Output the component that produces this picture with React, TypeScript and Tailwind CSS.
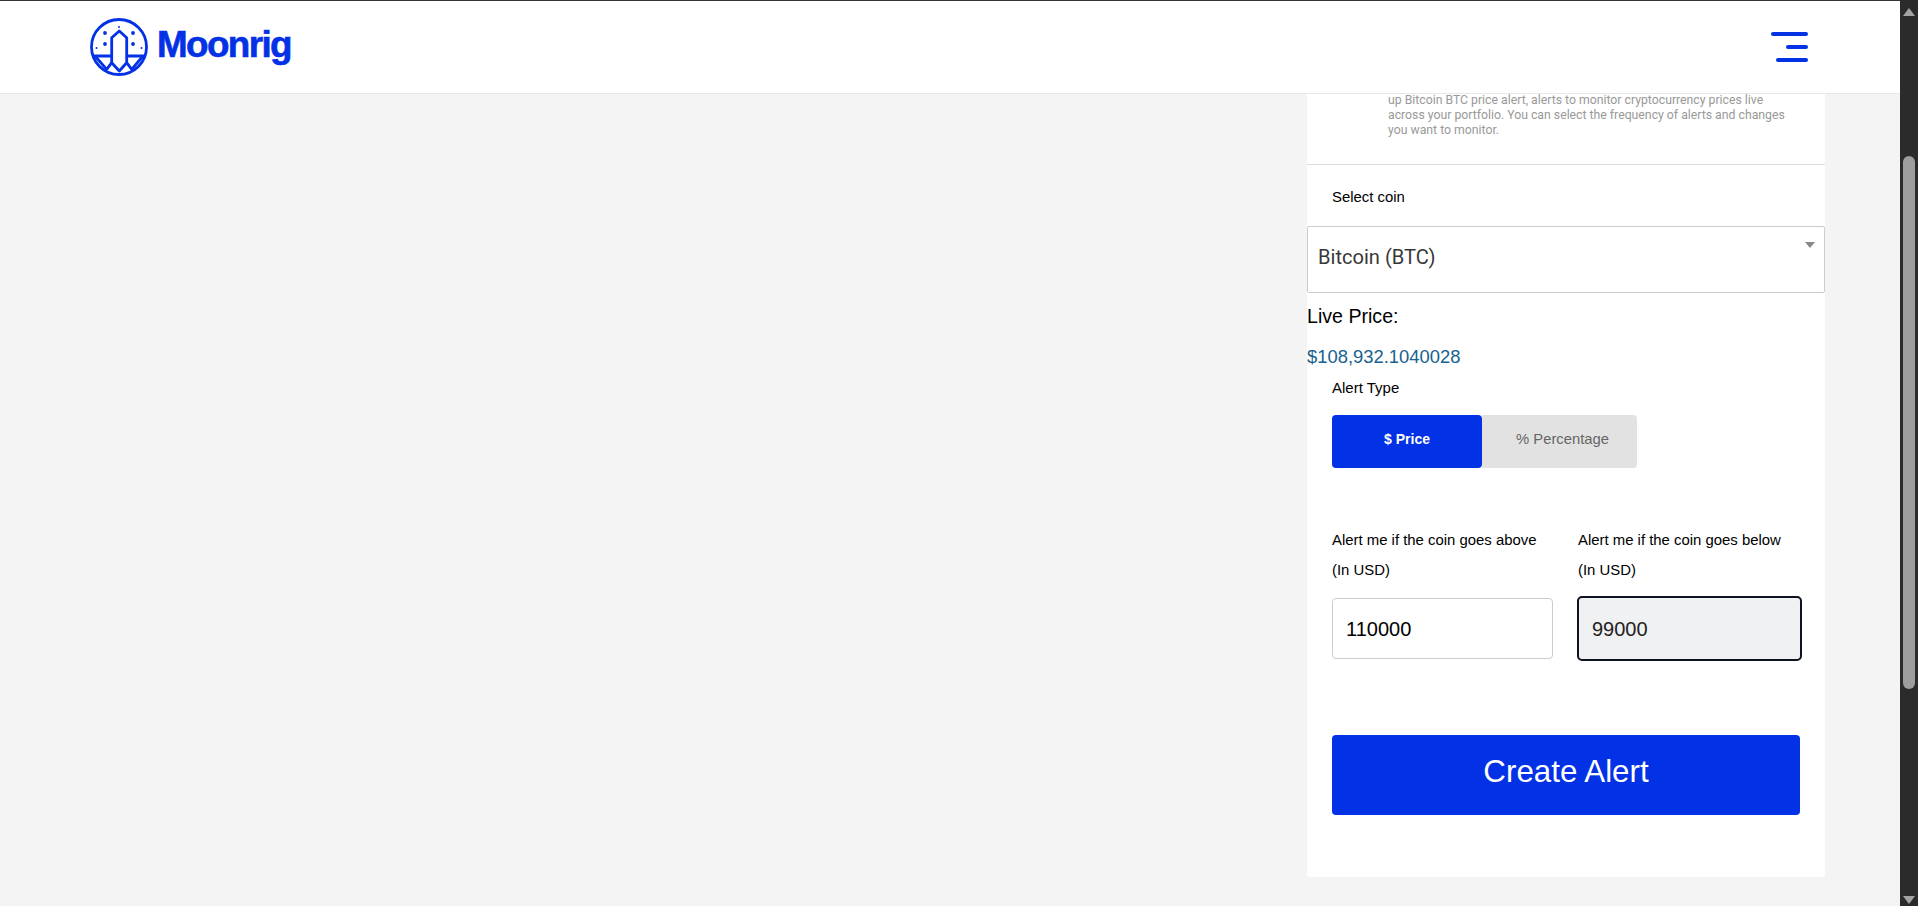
import React from 'react';

const font = { fontFamily: '"Liberation Sans", Arial, sans-serif' };

const Logo = () => (
  <svg width="58" height="58" viewBox="0 0 58 58" fill="none" stroke="#0331e5" strokeWidth="2.8" strokeLinejoin="round">
    <circle cx="29" cy="29" r="27.5" />
    <path d="M3 38H21.7M36.7 38H55" />
    <path d="M29.3 13L36.7 19.7V44.7L29.3 53L21.7 44.7V19.7Z" />
    <path d="M5 38L16.7 51.3L21.7 44.7M53 38L41.7 51.3L36.7 44.7" />
    <g fill="#0331e5" stroke="none">
      <circle cx="15" cy="15" r="1.9" />
      <circle cx="43" cy="15" r="1.9" />
      <circle cx="15" cy="26" r="1.9" />
      <circle cx="43" cy="26" r="1.9" />
      <circle cx="29" cy="9" r="1" />
      <circle cx="6.5" cy="30" r="1" />
      <circle cx="51.5" cy="30" r="1" />
    </g>
  </svg>
);

const Header = () => (
  <header className="h-[92px] shrink-0 flex items-center justify-between bg-white border-b border-[#e8e8e8] pl-[90px] pr-[92px] box-content">
    <div className="flex items-center gap-[9px]">
      <Logo />
      <span className="mb-[4px] text-[36.8px] font-bold tracking-[-1.6px] text-[#0331e5] leading-none [-webkit-text-stroke:0.6px_#0331e5]">Moonrig</span>
    </div>
    <div className="flex flex-col items-end gap-[9px] w-[37px]">
      <span className="block h-[4px] w-[37px] rounded-full bg-[#0331e5]" />
      <span className="block h-[4px] w-[22px] rounded-full bg-[#0331e5]" />
      <span className="block h-[4px] w-[32px] rounded-full bg-[#0331e5]" />
    </div>
  </header>
);

const Scrollbar = () => (
  <div className="w-[18px] shrink-0 bg-[#2b2b2b] flex flex-col items-center justify-between pt-[8px] pb-[2px]">
    <div className="flex flex-col items-center">
      <div className="w-0 h-0 border-x-[6px] border-x-transparent border-b-[8px] border-b-[#a3a3a3]" />
      <div className="w-[12px] h-[533px] mt-[140px] rounded-full bg-[#9e9e9e]" />
    </div>
    <div className="w-0 h-0 border-x-[6px] border-x-transparent border-t-[8px] border-t-[#a3a3a3]" />
  </div>
);

const AlertForm = () => (
  <section className="w-[518px] h-[783px] bg-white rounded-b-[4px]">
    <p className="pl-[81px] pr-[38px] h-[70px] -mt-[1px] text-[12.25px] leading-[15px] text-[#999999]" style={{ fontFamily: 'Roboto, sans-serif' }}>
      up Bitcoin BTC price alert, alerts to monitor cryptocurrency prices live across your portfolio. You can select the frequency of alerts and changes you want to monitor.
    </p>
    <div className="mt-[1px] border-t border-[#dddddd]" />
    <div className="pl-[25px] pt-[23px] h-[61px] text-[14.9px] leading-[18px] text-black">Select coin</div>
    <div className="relative h-[67px] border border-[#cccccc] rounded-[2px] pl-[10px] pt-[18px] text-[20.1px] leading-[24px] text-[#383838]" style={{ fontFamily: 'Roboto, sans-serif' }}>
      Bitcoin (BTC)
      <span className="absolute right-[9px] top-[15px] w-0 h-0 border-x-[5px] border-x-transparent border-t-[6px] border-t-[#888888]" />
    </div>
    <div className="mt-[11px] text-[19.6px] leading-[24px] text-black">Live Price:</div>
    <div className="mt-[17px] text-[18.4px] leading-[24px] text-[#17628f]">$108,932.1040028</div>
    <div className="mt-[10px] pl-[25px]">
      <div className="text-[15px] leading-[18px] text-black">Alert Type</div>
      <div className="mt-[18px] flex h-[53px]">
        <div className="w-[150px] pb-[5px] rounded-[4px] bg-[#0331e5] flex items-center justify-center text-[14px] font-bold text-white">$ Price</div>
        <div className="w-[155px] pb-[5px] pl-[6px] rounded-r-[4px] bg-[#e2e2e2] flex items-center justify-center text-[14.8px] text-[#666666]">% Percentage</div>
      </div>
      <div className="mt-[57px] flex gap-[25px] text-[14.9px] leading-[30px] text-black">
        <div className="w-[221px]">
          <div className="whitespace-nowrap">Alert me if the coin goes above</div>
          <div>(In USD)</div>
          <input
            defaultValue="110000"
            className="mt-[13px] w-full h-[61px] rounded-[4px] border border-[#cccccc] bg-white px-[13px] pt-[1px] text-[20px] text-black outline-none"
          />
        </div>
        <div className="w-[222px]">
          <div className="whitespace-nowrap">Alert me if the coin goes below</div>
          <div>(In USD)</div>
          <input
            defaultValue="99000"
            className="mt-[11px] -ml-[1px] w-[225px] h-[65px] rounded-[5px] border-[2.5px] border-[#0d1420] bg-[#f0f1f2] px-[13px] pt-[1px] text-[20px] text-[#222222] outline-none"
          />
        </div>
      </div>
      <button className="block mt-[74px] w-[468px] h-[80px] pb-[5px] rounded-[4px] bg-[#0331e5] text-[31.3px] text-white">Create Alert</button>
    </div>
  </section>
);

export default function App() {
  return (
    <div className="h-[906px] w-full flex overflow-hidden bg-[#f4f4f4]" style={font}>
      <div className="flex-1 flex flex-col min-w-0 border-t border-[#333333]">
        <Header />
        <main className="flex justify-end pr-[75px]">
          <AlertForm />
        </main>
      </div>
      <Scrollbar />
    </div>
  );
}
